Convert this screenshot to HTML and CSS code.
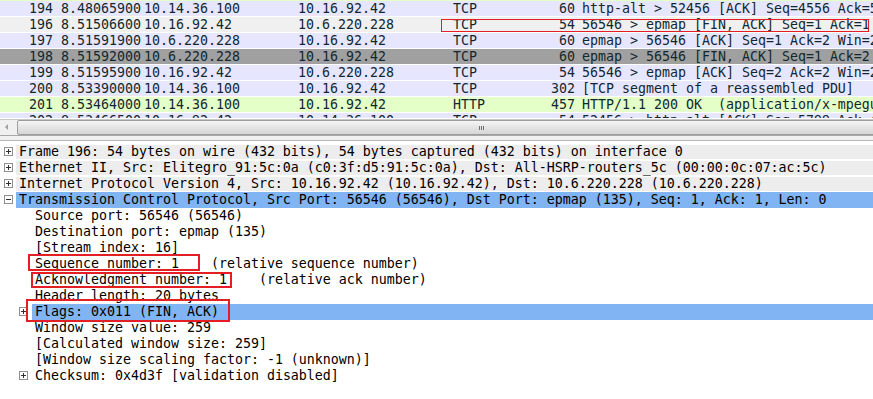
FILE: index.html
```html
<!DOCTYPE html>
<html>
<head>
<meta charset="utf-8">
<link rel="stylesheet" href="styles.css">
</head>
<body>
<div class="list">
  <div class="packets">
    <div class="strip"></div>
    <div class="row lav"><span class="no">194</span><span>8.48065900</span><span>10.14.36.100</span><span>10.16.92.42</span><span>TCP</span><span class="len">60</span><span class="info">http-alt &gt; 52456 [ACK] Seq=4556 Ack=5990 Win=64240 Len=0</span></div>
    <div class="row gry"><span class="no">196</span><span>8.51506600</span><span>10.16.92.42</span><span>10.6.220.228</span><span>TCP</span><span class="len">54</span><span class="info">56546 &gt; epmap [FIN, ACK] Seq=1 Ack=1 Win=259 Len=0</span></div>
    <div class="row lav"><span class="no">197</span><span>8.51591900</span><span>10.6.220.228</span><span>10.16.92.42</span><span>TCP</span><span class="len">60</span><span class="info">epmap &gt; 56546 [ACK] Seq=1 Ack=2 Win=256 Len=0</span></div>
    <div class="row dark"><span class="no">198</span><span>8.51592000</span><span>10.6.220.228</span><span>10.16.92.42</span><span>TCP</span><span class="len">60</span><span class="info">epmap &gt; 56546 [FIN, ACK] Seq=1 Ack=2 Win=256 Len=0</span></div>
    <div class="row lav"><span class="no">199</span><span>8.51595900</span><span>10.16.92.42</span><span>10.6.220.228</span><span>TCP</span><span class="len">54</span><span class="info">56546 &gt; epmap [ACK] Seq=2 Ack=2 Win=259 Len=0</span></div>
    <div class="row lav"><span class="no">200</span><span>8.53390000</span><span>10.14.36.100</span><span>10.16.92.42</span><span>TCP</span><span class="len">302</span><span class="info">[TCP segment of a reassembled PDU]</span></div>
    <div class="row grn"><span class="no">201</span><span>8.53464000</span><span>10.14.36.100</span><span>10.16.92.42</span><span>HTTP</span><span class="len">457</span><span class="info">HTTP/1.1 200 OK  (application/x-mpegurl)</span></div>
    <div class="row lav"><span class="no">202</span><span>8.53466500</span><span>10.16.92.42</span><span>10.14.36.100</span><span>TCP</span><span class="len">54</span><span class="info">52456 &gt; http-alt [ACK] Seq=5799 Ack=4959 Win=65535 Len=0</span></div>
    <div class="mark mark-top"></div>
  </div>
  <div class="hscroll">
    <div class="sbtn"><svg width="16" height="16" viewBox="0 0 16 16"><path d="M8 5 L5 8 L8 11 Z" fill="#a0a0a0"/></svg></div>
    <div class="thumb"><span class="grip"></span></div>
  </div>
</div>
<div class="splitter"></div>
<div class="details">
  <div class="trow top"><span class="exp"><svg width="9" height="9" viewBox="0 0 9 9"><rect x="0.5" y="0.5" width="8" height="8" fill="#fff" stroke="#8e8f8f"/><path d="M2 4.5H7M4.5 2V7" stroke="#303030"/></svg></span><span class="lbl gbg">Frame 196: 54 bytes on wire (432 bits), 54 bytes captured (432 bits) on interface 0</span></div>
  <div class="trow top"><span class="exp"><svg width="9" height="9" viewBox="0 0 9 9"><rect x="0.5" y="0.5" width="8" height="8" fill="#fff" stroke="#8e8f8f"/><path d="M2 4.5H7M4.5 2V7" stroke="#303030"/></svg></span><span class="lbl gbg">Ethernet II, Src: Elitegro_91:5c:0a (c0:3f:d5:91:5c:0a), Dst: All-HSRP-routers_5c (00:00:0c:07:ac:5c)</span></div>
  <div class="trow top"><span class="exp"><svg width="9" height="9" viewBox="0 0 9 9"><rect x="0.5" y="0.5" width="8" height="8" fill="#fff" stroke="#8e8f8f"/><path d="M2 4.5H7M4.5 2V7" stroke="#303030"/></svg></span><span class="lbl gbg">Internet Protocol Version 4, Src: 10.16.92.42 (10.16.92.42), Dst: 10.6.220.228 (10.6.220.228)</span></div>
  <div class="trow top"><span class="exp"><svg width="9" height="9" viewBox="0 0 9 9"><rect x="0.5" y="0.5" width="8" height="8" fill="#fff" stroke="#8e8f8f"/><path d="M2 4.5H7" stroke="#303030"/></svg></span><span class="lbl sel">Transmission Control Protocol, Src Port: 56546 (56546), Dst Port: epmap (135), Seq: 1, Ack: 1, Len: 0</span></div>
  <div class="trow child"><span class="lbl">Source port: 56546 (56546)</span></div>
  <div class="trow child"><span class="lbl">Destination port: epmap (135)</span></div>
  <div class="trow child"><span class="lbl">[Stream index: 16]</span></div>
  <div class="trow child"><span class="lbl">Sequence number: 1    (relative sequence number)</span></div>
  <div class="trow child"><span class="lbl">Acknowledgment number: 1    (relative ack number)</span></div>
  <div class="trow child"><span class="lbl">Header length: 20 bytes</span></div>
  <div class="trow child sub"><span class="exp"><svg width="9" height="9" viewBox="0 0 9 9"><rect x="0.5" y="0.5" width="8" height="8" fill="#fff" stroke="#8e8f8f"/><path d="M2 4.5H7M4.5 2V7" stroke="#303030"/></svg></span><span class="lbl sel">Flags: 0x011 (FIN, ACK)</span></div>
  <div class="trow child"><span class="lbl">Window size value: 259</span></div>
  <div class="trow child"><span class="lbl">[Calculated window size: 259]</span></div>
  <div class="trow child"><span class="lbl">[Window size scaling factor: -1 (unknown)]</span></div>
  <div class="trow child sub"><span class="exp"><svg width="9" height="9" viewBox="0 0 9 9"><rect x="0.5" y="0.5" width="8" height="8" fill="#fff" stroke="#8e8f8f"/><path d="M2 4.5H7M4.5 2V7" stroke="#303030"/></svg></span><span class="lbl">Checksum: 0x4d3f [validation disabled]</span></div>
  <div class="mark mark-seq"></div>
  <div class="mark mark-ack"></div>
  <div class="mark mark-flags"></div>
</div>
</body>
</html>
```

FILE: styles.css
```css
* { box-sizing: border-box; }
html, body { margin: 0; padding: 0; background: #fff; }
body {
  width: 873px;
  height: 399px;
  overflow: hidden;
  font-family: "DejaVu Sans Mono", "Liberation Mono", monospace;
  font-size: 13.29px;
  color: #000;
}
.list { position: relative; }
.packets {
  position: relative;
  height: 119px;
  overflow: hidden;
  border-bottom: 1px solid #fff;
}
.strip { height: 1px; background: #e4ffc7; }
.row {
  display: grid;
  grid-template-columns: 61px 83px 154px 155px 90px 39px 1fr;
  height: 16px;
  line-height: 16px;
  border-bottom: 1px solid #fff;
  color: #12272e;
  white-space: pre;
}
.row span { overflow: hidden; }
.row .no { text-align: right; padding-right: 8px; }
.row .len { text-align: right; padding-right: 7px; }
.row .info { overflow: hidden; }
.lav { background: #e7e6ff; }
.gry { background: #f0f0f0; }
.dark { background: #a0a0a0; }
.grn { background: #e4ffc7; }
.mark { position: absolute; border: 2px solid #e31e24; }
.mark-top { left: 441px; top: 19px; width: 428px; height: 13px; border-width: 1px; }
.hscroll {
  display: flex;
  height: 17px;
  background: #f0f0f0;
  border-top: 1px solid #c8c8c8;
  border-bottom: 1px solid #a8a8a8;
}
.sbtn { width: 16px; flex: none; }
.sbtn svg { display: block; margin-top: -1px; }
.thumb {
  position: relative;
  flex: none;
  width: 930px;
  margin-left: 1px;
  background: linear-gradient(#f6f6f6, #e4e4e4 50%, #d6d6d6);
  border: 1px solid #9c9c9c;
  border-radius: 2px;
}
.grip {
  position: absolute;
  left: 461px;
  top: 5px;
  width: 5px;
  height: 4px;
  background: repeating-linear-gradient(90deg, #707070 0 1px, transparent 1px 2px);
}
.splitter {
  height: 5px;
  background: #f0f0f0;
  border-bottom: 1px solid #b8b8b8;
}
.details {
  position: relative;
  padding-top: 3px;
}
.trow {
  position: relative;
  display: flex;
  height: 16px;
  line-height: 16px;
  white-space: pre;
}
.trow .exp {
  position: absolute;
  top: 3px;
  width: 9px;
  height: 9px;
}
.trow .exp svg { display: block; }
.top .exp { left: 4px; }
.sub .exp { left: 19px; }
.lbl { display: block; flex: 1; }
.top .lbl { margin-left: 16px; padding-left: 3px; }
.child .lbl { margin-left: 32px; padding-left: 3px; }
.gbg { background: #ededed; margin-top: 1px; margin-bottom: 1px; line-height: 14px; }
.sel { background: #80b4f2; }
.mark-seq { left: 28px; top: 113px; width: 172px; height: 17px; }
.mark-ack { left: 31px; top: 131px; width: 201px; height: 16px; }
.mark-flags { left: 26px; top: 158px; width: 204px; height: 23px; }
```
